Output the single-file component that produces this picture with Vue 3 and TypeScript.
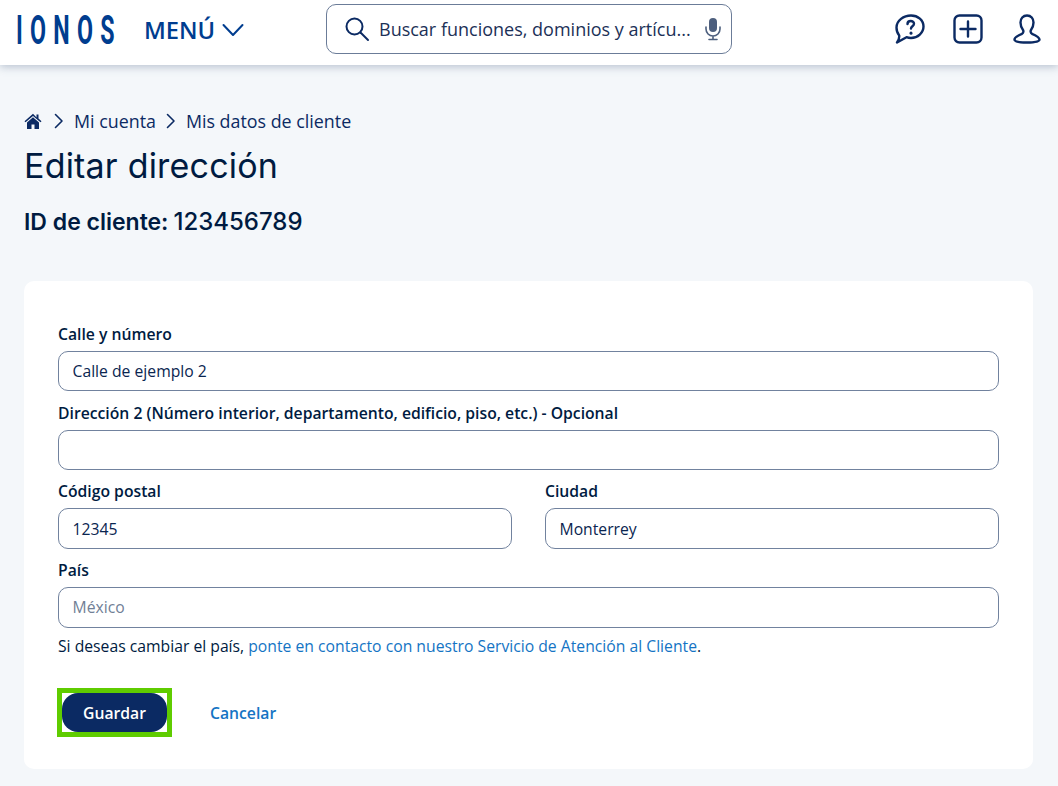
<template>
  <div class="page">
    <header class="topbar">
      <div class="brand"><span class="logo">IONOS</span></div>
      <button class="menu-btn">
        MENÚ
        <svg width="22" height="14" viewBox="0 0 22 14" fill="none" stroke="#003d8f" stroke-width="2" stroke-linecap="round" stroke-linejoin="round"><path d="M1.500 2l9.500 10 9.500-10" /></svg>
      </button>
      <div class="search">
        <svg class="search-icon" width="26" height="26" viewBox="0 0 26 26" fill="none" stroke="#0b2a63" stroke-width="2" stroke-linecap="round"><circle cx="10.5" cy="10.5" r="8" /><path d="M16.5 16.5l7.5 7.5" /></svg>
        <span class="search-text">Buscar funciones, dominios y artícu...</span>
        <svg width="16" height="24" viewBox="0 0 16 24" fill="none"><rect x="4" y="1" width="8" height="14" rx="4" fill="#4d5f7e" /><path d="M1 10v2a7 7 0 0 0 14 0v-2M8 19v3M4 22.5h8" stroke="#4d5f7e" stroke-width="1.6" stroke-linecap="round" /></svg>
      </div>
      <div class="actions">
        <svg width="30" height="30" viewBox="0 0 30 30" fill="none" stroke="#0b2a63" stroke-width="2.400" stroke-linecap="round" stroke-linejoin="round"><path d="M16 1.500c7 0 12.500 4.800 12.500 11s-5.700 11.500-12.500 11.500c-1.700 0-3.200-.3-4.500-.8L2 28.500c1.500-2 2.500-4.300 2.200-7C2.500 19.500 1.500 16.500 1.500 13.500 1.500 6.500 8.700 1.500 16 1.500z" /><path d="M12.500 10c0-4 6.500-3.800 6.500-.3 0 2.500-3 2.500-3 4.800" /><path d="M16 19v.3" stroke-width="3" /></svg>
        <svg width="30" height="30" viewBox="0 0 30 30" fill="none" stroke="#0b2a63" stroke-width="2.400" stroke-linecap="round"><rect x="1.500" y="1.500" width="27" height="27" rx="5" /><path d="M15 7.500v15M7.500 15h15" /></svg>
        <svg class="user-icon" width="28" height="30" viewBox="0 0 28 30" fill="none" stroke="#0b2a63" stroke-width="2.400" stroke-linecap="round" stroke-linejoin="round"><path d="M14 1.500c-4 0-6.500 3-6.500 7 0 3 1 5.500 2.500 7.500.8 1.200.3 3-1 3.800C5 21.500 1.500 23 1.500 25.500c0 2.500 5 3 12.500 3s12.500-.5 12.500-3c0-2.500-3.500-4-7.500-5.700-1.300-.8-1.800-2.600-1-3.800 1.500-2 2.500-4.500 2.500-7.500 0-4-2.500-7-6.500-7z" /></svg>
      </div>
    </header>

    <main class="content">
      <nav class="crumbs">
        <svg class="home" width="18" height="16" viewBox="0 0 18 16"><path d="M9 .8L.5 8.200l1 1.100L9 2.900l7.500 6.400 1-1.100-3-2.600V1.500h-2v2.900z" fill="#0b2a63" /><path d="M9 4.300L3 9.400V16h4.500v-4.500h3V16H15V9.400z" fill="#0b2a63" /></svg>
        <svg class="sep" width="10" height="16" viewBox="0 0 10 16" fill="none" stroke="#0b2a63" stroke-width="1.600" stroke-linecap="round" stroke-linejoin="round"><path d="M1.500 1.500L8 8l-6.500 6.500" /></svg>
        <span>Mi cuenta</span>
        <svg class="sep" width="10" height="16" viewBox="0 0 10 16" fill="none" stroke="#0b2a63" stroke-width="1.600" stroke-linecap="round" stroke-linejoin="round"><path d="M1.500 1.500L8 8l-6.500 6.500" /></svg>
        <span>Mis datos de cliente</span>
      </nav>
      <h1 class="title">Editar dirección</h1>
      <p class="client-id"><strong>ID de cliente:</strong><span>123456789</span></p>

      <form class="card" @submit.prevent>
        <label class="field">
          <span class="label">Calle y número</span>
          <input class="input" type="text" value="Calle de ejemplo 2" />
        </label>
        <label class="field">
          <span class="label">Dirección 2 (Número interior, departamento, edificio, piso, etc.) - Opcional</span>
          <input class="input" type="text" />
        </label>
        <div class="two-cols">
          <label class="field">
            <span class="label">Código postal</span>
            <input class="input" type="text" value="12345" />
          </label>
          <label class="field">
            <span class="label">Ciudad</span>
            <input class="input" type="text" value="Monterrey" />
          </label>
        </div>
        <label class="field">
          <span class="label">País</span>
          <input class="input" type="text" value="México" disabled />
        </label>
        <p class="hint">Si deseas cambiar el país, <a href="#">ponte en contacto con nuestro Servicio de Atención al Cliente</a>.</p>
        <div class="buttons">
          <span class="focus-ring"><button class="save" type="submit">Guardar</button></span>
          <a class="cancel" href="#">Cancelar</a>
        </div>
      </form>
    </main>
  </div>
</template>

<script setup lang="ts">
</script>

<style>
html, body {
  margin: 0;
  background: #f4f7fa;
}
</style>

<style scoped>
.page {
  min-height: 786px;
  background: #f4f7fa;
  font-family: "Open Sans", "Noto Sans", sans-serif;
  color: #001b41;
  overflow: hidden;
}

.topbar {
  height: 65px;
  box-sizing: border-box;
  background: #fff;
  box-shadow: 0 2px 8px rgba(113, 130, 158, 0.45);
  display: flex;
  align-items: center;
  padding-left: 16px;
}

.brand {
  width: 128px;
  height: 40px;
  margin-top: -4px;
  overflow: visible;
}

.logo {
  display: inline-block;
  font-family: "Roboto", sans-serif;
  font-weight: 700;
  font-size: 40px;
  line-height: 40px;
  letter-spacing: 12.5px;
  color: #003d8f;
  white-space: nowrap;
  transform: scaleX(0.58);
  transform-origin: left center;
}

.menu-btn {
  display: flex;
  align-items: center;
  gap: 7px;
  width: 182px;
  padding: 0;
  margin-top: -5px;
  border: none;
  background: none;
  font-family: inherit;
  font-size: 23.7px;
  font-weight: 600;
  color: #003d8f;
}

.search {
  width: 406px;
  height: 50px;
  box-sizing: border-box;
  border: 1px solid #6b7c98;
  border-radius: 10px;
  display: flex;
  align-items: center;
  padding: 0 10px 0 17px;
  margin-top: -7px;
}

.search-text {
  flex: 1;
  margin-left: 9px;
  font-size: 18px;
  color: #1c3157;
  white-space: nowrap;
}

.actions {
  display: flex;
  align-items: center;
  gap: 28px;
  margin-left: 163px;
  margin-top: -7px;
}

.user-icon {
  margin-left: 2px;
}

.content {
  padding: 44px 25px 0 24px;
}

.crumbs {
  display: flex;
  align-items: center;
  font-size: 17.85px;
  line-height: 24px;
  color: #0b2a63;
}

.crumbs .home {
  margin-right: 2px;
}

.crumbs .sep {
  margin: 0 10px;
}

.title {
  margin: 11px 0 0;
  font-family: "Inter", sans-serif;
  font-size: 34px;
  line-height: 44px;
  font-weight: 400;
  letter-spacing: 0.2px;
  color: #001b41;
}

.client-id {
  margin: 19px 0 0;
  font-family: "Inter", sans-serif;
  font-size: 24px;
  line-height: 30px;
  font-weight: 500;
}

.client-id strong {
  font-size: 23px;
  font-weight: 600;
  margin-right: 5px;
}

.card {
  margin-top: 44px;
  width: 1009px;
  height: 488px;
  box-sizing: border-box;
  background: #fff;
  border-radius: 10px;
  padding: 43px 34px 0;
}

.field {
  display: block;
  margin-bottom: 11.25px;
}

.label {
  display: block;
  font-size: 15.73px;
  font-weight: 600;
  line-height: 20px;
  margin-bottom: 7px;
  color: #001b41;
}

.input {
  display: block;
  width: 100%;
  height: 40.45px;
  box-sizing: border-box;
  border: 1px solid #71829e;
  border-radius: 10px;
  padding: 0 13.5px;
  background: #fff;
  font-family: inherit;
  font-size: 15.73px;
  color: #0a2550;
  outline: none;
}

.input:disabled {
  color: #718096;
  opacity: 1;
}

.two-cols {
  display: grid;
  grid-template-columns: 454px 454px;
  column-gap: 33px;
}

.hint {
  margin: -3px 0 0;
  font-size: 15.73px;
  line-height: 20px;
  color: #001b41;
}

.hint a {
  color: #1474c4;
  text-decoration: none;
}

.buttons {
  display: flex;
  align-items: center;
  margin-top: 32px;
}

.focus-ring {
  display: block;
  margin-left: -1px;
  border: 5px solid #5fcc00;
  background: #fff;
}

.save {
  display: block;
  width: 105px;
  height: 39px;
  padding: 2px 0 0;
  border: none;
  border-radius: 16px;
  background: #0b2a63;
  color: #fff;
  font-family: inherit;
  font-size: 15.73px;
  font-weight: 600;
}

.cancel {
  margin-left: 38px;
  margin-top: 2px;
  color: #1474c4;
  font-size: 15.73px;
  font-weight: 600;
  text-decoration: none;
}
</style>
